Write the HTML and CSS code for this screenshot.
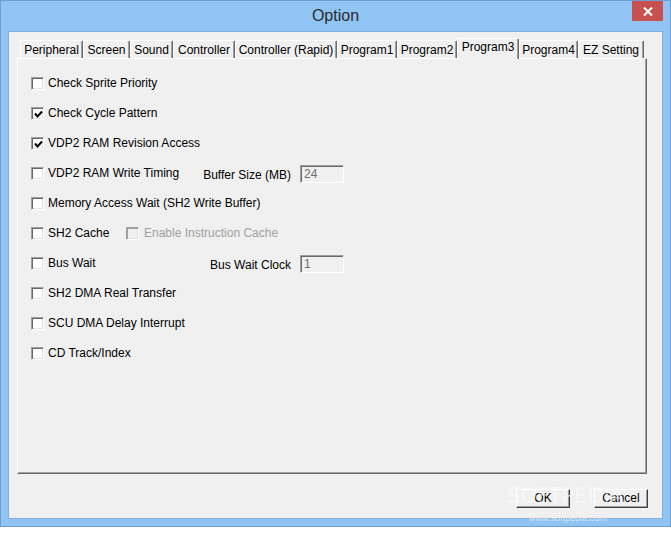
FILE: index.html
```html
<!DOCTYPE html>
<html>
<head>
<meta charset="utf-8">
<title>Option</title>
<link rel="stylesheet" href="styles.css">
</head>
<body>
<div class="window">
  <div class="titlebar">
    <span></span>
    <span class="title">Option</span>
    <span class="close"><svg width="10" height="9" viewBox="0 0 10 9"><path d="M1 0.5 L9 8.5 M9 0.5 L1 8.5" stroke="#fff" stroke-width="2"/></svg></span>
  </div>
  <div class="client">
    <div class="tabs">
      <div class="tabrow">
        <div class="tab t1">Peripheral</div>
        <div class="tab t2">Screen</div>
        <div class="tab t3">Sound</div>
        <div class="tab t4">Controller</div>
        <div class="tab t5">Controller (Rapid)</div>
        <div class="tab t6">Program1</div>
        <div class="tab t7">Program2</div>
        <div class="tab t8 selected">Program3</div>
        <div class="tab t9">Program4</div>
        <div class="tab t10">EZ Setting</div>
      </div>
      <div class="panel">
        <div class="row"><span class="check"><span class="box"></span><span class="lbl">Check Sprite Priority</span></span></div>
        <div class="row"><span class="check"><span class="box on"><svg width="9" height="9" viewBox="0 0 9 9"><path d="M1 3.5 L3.5 6.5 L8 1.5" fill="none" stroke="#000" stroke-width="2"/></svg></span><span class="lbl">Check Cycle Pattern</span></span></div>
        <div class="row"><span class="check"><span class="box on"><svg width="9" height="9" viewBox="0 0 9 9"><path d="M1 3.5 L3.5 6.5 L8 1.5" fill="none" stroke="#000" stroke-width="2"/></svg></span><span class="lbl">VDP2 RAM Revision Access</span></span></div>
        <div class="row wide"><span class="check"><span class="box"></span><span class="lbl">VDP2 RAM Write Timing</span></span>
          <span class="field"><span class="flbl">Buffer Size (MB)</span><span class="input">24</span></span></div>
        <div class="row"><span class="check"><span class="box"></span><span class="lbl">Memory Access Wait (SH2 Write Buffer)</span></span></div>
        <div class="row"><span class="check fixed"><span class="box"></span><span class="lbl">SH2 Cache</span></span><span class="check disabled"><span class="box"></span><span class="lbl">Enable Instruction Cache</span></span></div>
        <div class="row wide"><span class="check"><span class="box"></span><span class="lbl">Bus Wait</span></span>
          <span class="field"><span class="flbl">Bus Wait Clock</span><span class="input">1</span></span></div>
        <div class="row"><span class="check"><span class="box"></span><span class="lbl">SH2 DMA Real Transfer</span></span></div>
        <div class="row"><span class="check"><span class="box"></span><span class="lbl">SCU DMA Delay Interrupt</span></span></div>
        <div class="row"><span class="check"><span class="box"></span><span class="lbl">CD Track/Index</span></span></div>
      </div>
    </div>
    <div class="buttons">
      <div class="btn">OK</div>
      <div class="btn">Cancel</div>
    </div>
  </div>
  <div class="watermark">SOFTPEDIA</div>
  <div class="wmurl">www.softpedia.com</div>
</div>
</body>
</html>
```

FILE: styles.css
```css
html, body {
  margin: 0;
  padding: 0;
  background: #ffffff;
}
body {
  font-family: "Liberation Sans", Arial, sans-serif;
  font-size: 12px;
  color: #000;
}
.window {
  position: relative;
  width: 671px;
  height: 527px;
  box-sizing: border-box;
  border: 1px solid #6f9fd0;
  background: #90c4f5;
  display: flex;
  flex-direction: column;
}
.titlebar {
  height: 30px;
  flex: 0 0 30px;
  display: grid;
  grid-template-columns: 1fr auto 1fr;
  align-items: start;
}
.title {
  font-size: 16px;
  color: #2b2b2b;
  line-height: 30px;
}
.close {
  justify-self: end;
  margin-right: 7px;
  width: 31px;
  height: 20px;
  background: #c75050;
  display: flex;
  align-items: center;
  justify-content: center;
}
.client {
  margin: 0 7px 7px 7px;
  height: 488px;
  box-sizing: border-box;
  border: 1px solid #82afdc;
  background: #f0f0f0;
  display: flex;
  flex-direction: column;
}
.tabs {
  margin: 6px 0 0 8px;
  width: 630px;
}
.tabrow {
  height: 20px;
  display: flex;
  align-items: flex-end;
  padding-left: 3px;
  position: relative;
  z-index: 2;
}
.tab {
  box-sizing: border-box;
  height: 18px;
  border-top: 1px solid #ffffff;
  border-left: 1px solid #ffffff;
  border-right: 1px solid #696969;
  box-shadow: inset -1px 0 #a0a0a0;
  border-radius: 2px 2px 0 0;
  background: #f0f0f0;
  text-align: center;
  line-height: 18px;
  white-space: nowrap;
}
.tab.selected {
  height: 21px;
  margin-bottom: -1px;
  line-height: 16px;
}
.t1 { width: 63px; }
.t2 { width: 47px; }
.t3 { width: 43px; }
.t4 { width: 62px; }
.t5 { width: 102px; }
.t6 { width: 60px; }
.t7 { width: 60px; }
.t8 { width: 62px; }
.t9 { width: 59px; }
.t10 { width: 66px; }
.panel {
  position: relative;
  z-index: 1;
  box-sizing: border-box;
  height: 416px;
  border-top: 1px solid #ffffff;
  border-left: 1px solid #ffffff;
  border-right: 1px solid #696969;
  border-bottom: 1px solid #696969;
  box-shadow: inset -1px -1px #a0a0a0;
  padding: 18px 0 0 13px;
  display: flex;
  flex-direction: column;
  gap: 17px;
}
.row {
  height: 13px;
  display: flex;
  align-items: center;
}
.row.wide {
  width: 313px;
}
.check {
  display: flex;
  align-items: center;
}
.check.fixed {
  width: 95px;
}
.box {
  box-sizing: border-box;
  width: 13px;
  height: 13px;
  background: #ffffff;
  border: 1px solid;
  border-color: #a0a0a0 #ffffff #ffffff #a0a0a0;
  box-shadow: inset 1px 1px #696969, inset -1px -1px #e3e3e3;
  display: flex;
  align-items: center;
  justify-content: center;
  flex: 0 0 13px;
}
.box svg {
  margin: 1px 0 0 1px;
}
.lbl {
  margin-left: 4px;
  white-space: nowrap;
  line-height: 13px;
}
.disabled .box {
  background: #f0f0f0;
  box-shadow: inset 1px 1px #a0a0a0, inset -1px -1px #e3e3e3;
}
.disabled .lbl {
  color: #a0a0a0;
  margin-left: 5px;
}
.field {
  margin-left: auto;
  display: flex;
  align-items: center;
  gap: 9px;
}
.flbl {
  padding-top: 2px;
  white-space: nowrap;
}
.input {
  box-sizing: border-box;
  width: 44px;
  height: 18px;
  background: #f0f0f0;
  border: 1px solid;
  border-color: #a0a0a0 #ffffff #ffffff #a0a0a0;
  box-shadow: inset 1px 1px #696969;
  color: #6d6d6d;
  padding-left: 3px;
  line-height: 16px;
}
.buttons {
  margin-top: 15px;
  margin-right: 14px;
  display: flex;
  justify-content: flex-end;
  gap: 24px;
}
.btn {
  box-sizing: border-box;
  width: 54px;
  height: 19px;
  background: #f0f0f0;
  border: 1px solid;
  border-color: #ffffff #404040 #404040 #ffffff;
  box-shadow: inset -1px -1px #a0a0a0;
  text-align: center;
  line-height: 17px;
}
.watermark {
  position: absolute;
  left: 506px;
  top: 483px;
  font-family: "DejaVu Sans", sans-serif;
  font-size: 21px;
  letter-spacing: 0px;
  color: rgba(255, 255, 255, 0.5);
  pointer-events: none;
}
.wmurl {
  position: absolute;
  left: 528px;
  top: 512px;
  font-size: 9px;
  color: rgba(235, 235, 235, 0.85);
  pointer-events: none;
}
```
